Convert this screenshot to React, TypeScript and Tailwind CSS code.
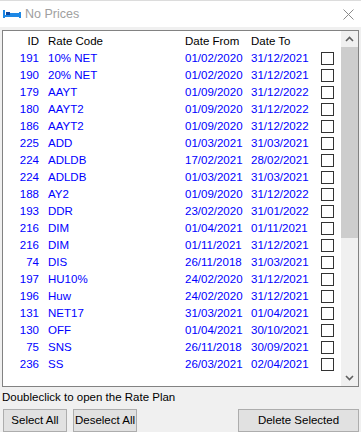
import React from "react";

interface RatePlan {
  id: number;
  code: string;
  from: string;
  to: string;
}

const plans: RatePlan[] = [
  { id: 191, code: "10% NET", from: "01/02/2020", to: "31/12/2021" },
  { id: 190, code: "20% NET", from: "01/02/2020", to: "31/12/2021" },
  { id: 179, code: "AAYT", from: "01/09/2020", to: "31/12/2022" },
  { id: 180, code: "AAYT2", from: "01/09/2020", to: "31/12/2022" },
  { id: 186, code: "AAYT2", from: "01/09/2020", to: "31/12/2022" },
  { id: 225, code: "ADD", from: "01/03/2021", to: "31/03/2021" },
  { id: 224, code: "ADLDB", from: "17/02/2021", to: "28/02/2021" },
  { id: 224, code: "ADLDB", from: "01/03/2021", to: "31/03/2021" },
  { id: 188, code: "AY2", from: "01/09/2020", to: "31/12/2022" },
  { id: 193, code: "DDR", from: "23/02/2020", to: "31/01/2022" },
  { id: 216, code: "DIM", from: "01/04/2021", to: "01/11/2021" },
  { id: 216, code: "DIM", from: "01/11/2021", to: "31/12/2021" },
  { id: 74, code: "DIS", from: "26/11/2018", to: "31/03/2021" },
  { id: 197, code: "HU10%", from: "24/02/2020", to: "31/12/2021" },
  { id: 196, code: "Huw", from: "24/02/2020", to: "31/12/2021" },
  { id: 131, code: "NET17", from: "31/03/2021", to: "01/04/2021" },
  { id: 130, code: "OFF", from: "01/04/2021", to: "30/10/2021" },
  { id: 75, code: "SNS", from: "26/11/2018", to: "30/09/2021" },
  { id: 236, code: "SS", from: "26/03/2021", to: "02/04/2021" },
];

function BedIcon() {
  return (
    <svg width="18" height="8" viewBox="0 0 18 8" className="block">
      <rect x="0" y="0" width="2" height="8" fill="#1e88e5" />
      <rect x="0" y="5" width="18" height="2" fill="#1e88e5" />
      <rect x="16" y="2" width="2" height="6" fill="#1e88e5" />
      <rect x="3" y="2" width="4" height="3" fill="#0d47a1" />
      <rect x="7" y="3" width="9" height="2" fill="#1e88e5" />
    </svg>
  );
}

export default function App() {
  return (
    <div
      className="w-[361px] h-[432px] overflow-hidden bg-[#f0f0f0] text-[11.5px] flex flex-col"
      style={{ fontFamily: '"Liberation Sans", Arial, sans-serif' }}
    >
      {/* TITLE BAR */}
      <div className="h-[27px] bg-white border-t border-[#dcdcdc] flex items-center pl-[3px] pr-[7px] shrink-0">
        <BedIcon />
        <span className="ml-[4px] text-[12.5px] text-[#a0a0a0] leading-none">No Prices</span>
        <svg width="11" height="11" viewBox="0 0 11 11" className="ml-auto">
          <path d="M0.5 0.5 L10.5 10.5 M10.5 0.5 L0.5 10.5" stroke="#8a8a8a" strokeWidth="1" />
        </svg>
      </div>

      {/* LIST */}
      <div className="mt-[3px] ml-[2px] mr-[2px] h-[357px] bg-white border border-[#828282] flex shrink-0">
        <div className="flex-1 pt-[3px] overflow-hidden">
          <div className="flex h-[16px] items-center leading-none text-black whitespace-nowrap">
            <span className="w-[36px] text-right">ID</span>
            <span className="ml-[9px] w-[137px]">Rate Code</span>
            <span className="w-[66px]">Date From</span>
            <span>Date To</span>
          </div>
          {plans.map((p, i) => (
            <div key={i} className="flex h-[17px] items-center leading-none text-[#0000ff] whitespace-nowrap">
              <span className="w-[36px] text-right">{p.id}</span>
              <span className="ml-[9px] w-[137px]">{p.code}</span>
              <span className="w-[66px]">{p.from}</span>
              <span className="w-[70px]">{p.to}</span>
              <span className="w-[13px] h-[13px] border border-[#333333] bg-white" />
            </div>
          ))}
        </div>

        {/* SCROLLBAR */}
        <div className="w-[17px] bg-[#f0f0f0] flex flex-col items-center">
          <div className="h-[16px] flex items-center justify-center">
            <svg width="9" height="6" viewBox="0 0 9 6">
              <path d="M1 5 L4.5 1.5 L8 5" fill="none" stroke="#606060" strokeWidth="1.6" />
            </svg>
          </div>
          <div className="w-full h-[191px] bg-[#cdcdcd]" />
          <div className="flex-1" />
          <div className="h-[17px] flex items-center justify-center">
            <svg width="9" height="6" viewBox="0 0 9 6">
              <path d="M1 1 L4.5 4.5 L8 1" fill="none" stroke="#606060" strokeWidth="1.6" />
            </svg>
          </div>
        </div>
      </div>

      {/* FOOTER */}
      <div className="h-[24px] pl-[2px] flex items-center text-black whitespace-nowrap">Doubleclick to open the Rate Plan</div>
      <div className="flex pl-[3px] pr-[2px] whitespace-nowrap">
        <button className="w-[64px] h-[23px] bg-[#e1e1e1] border border-[#adadad] text-black">Select All</button>
        <button className="ml-[6px] w-[64px] h-[23px] bg-[#e1e1e1] border border-[#adadad] text-black">Deselect All</button>
        <button className="ml-auto w-[121px] h-[23px] bg-[#e1e1e1] border border-[#adadad] text-black">Delete Selected</button>
      </div>
    </div>
  );
}
